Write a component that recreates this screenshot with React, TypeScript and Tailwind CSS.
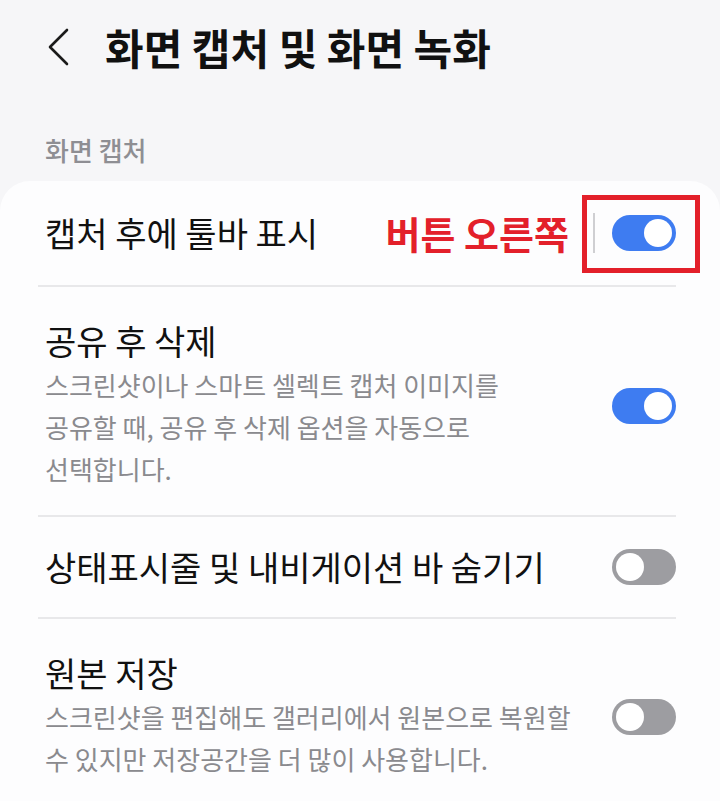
import React from "react";

const FONT = { fontFamily: '"Noto Sans CJK KR", "Noto Sans", sans-serif' };

function Toggle({ on }: { on: boolean }) {
  return (
    <div
      className={`relative w-[64px] h-[36px] shrink-0 rounded-full ${on ? "bg-[#3e7cf1]" : "bg-[#9d9da1]"}`}
    >
      {on ? (
        <div className="absolute right-[4px] top-[4px] w-[28px] h-[28px] rounded-full bg-white" />
      ) : (
        <div className="absolute left-[4px] top-[4px] w-[28px] h-[28px] rounded-full bg-white" />
      )}
    </div>
  );
}

export default function App() {
  return (
    <div className="w-[720px] h-[801px] overflow-hidden bg-[#f6f6f8]" style={FONT}>
      {/* Header */}
      <div className="h-[94px] flex items-center pl-[46px]">
        <svg width="24" height="40" viewBox="0 0 24 40" fill="none">
          <path d="M21 3 L4 20 L21 37" stroke="#1a1a1a" strokeWidth="2.6" strokeLinecap="round" strokeLinejoin="round" />
        </svg>
        <h1 className="ml-[35px] text-[42px] leading-[48px] font-bold text-[#111111]">화면 캡처 및 화면 녹화</h1>
      </div>

      {/* Section header */}
      <div className="pt-[40px] pb-[15px] pl-[45px]">
        <div className="text-[26px] leading-[32px] font-medium text-[#8e8e93]">화면 캡처</div>
      </div>

      {/* Card */}
      <div className="bg-[#fdfdfe] rounded-t-[30px] pl-[38px] pr-[44px]">
        {/* Row 1 */}
        <div className="relative h-[106px] flex items-center pl-[7px] border-b-2 border-[#e8e8ea]">
          <div className="flex-1 text-[34px] leading-[40px] text-[#111111]">캡처 후에 툴바 표시</div>
          <div className="text-[38px] leading-[40px] font-bold text-[#e3202a]">버튼 오른쪽</div>
          <div className="ml-[24px] mr-[17px] w-[2px] h-[40px] bg-[#cfcfd2]" />
          <Toggle on={true} />
          <div className="absolute left-[544px] top-[14px] w-[118px] h-[78px] border-[5px] border-[#e3202a]" />
        </div>

        {/* Row 2 */}
        <div className="flex items-center gap-[20px] pl-[7px] pt-[34px] pb-[25px] border-b-2 border-[#e8e8ea]">
          <div className="flex-1 min-w-0">
            <div className="text-[34px] leading-[40px] text-[#111111]">공유 후 삭제</div>
            <div className="mt-[3px] text-[26px] leading-[42px] text-[#8a8a8e]">
              스크린샷이나 스마트 셀렉트 캡처 이미지를
              <br />
              공유할 때, 공유 후 삭제 옵션을 자동으로
              <br />
              선택합니다.
            </div>
          </div>
          <Toggle on={true} />
        </div>

        {/* Row 3 */}
        <div className="h-[102px] flex items-center gap-[20px] pl-[7px] border-b-2 border-[#e8e8ea]">
          <div className="flex-1 min-w-0 text-[34px] leading-[40px] text-[#111111]">
            상태표시줄 및 내비게이션 바 숨기기
          </div>
          <Toggle on={false} />
        </div>

        {/* Row 4 */}
        <div className="flex items-center gap-[20px] pl-[7px] pt-[34px] pb-[21px]">
          <div className="flex-1 min-w-0">
            <div className="text-[34px] leading-[40px] text-[#111111]">원본 저장</div>
            <div className="mt-[3px] text-[26px] leading-[42px] text-[#8a8a8e]">
              스크린샷을 편집해도 갤러리에서 원본으로 복원할
              <br />
              수 있지만 저장공간을 더 많이 사용합니다.
            </div>
          </div>
          <Toggle on={false} />
        </div>
      </div>
    </div>
  );
}
